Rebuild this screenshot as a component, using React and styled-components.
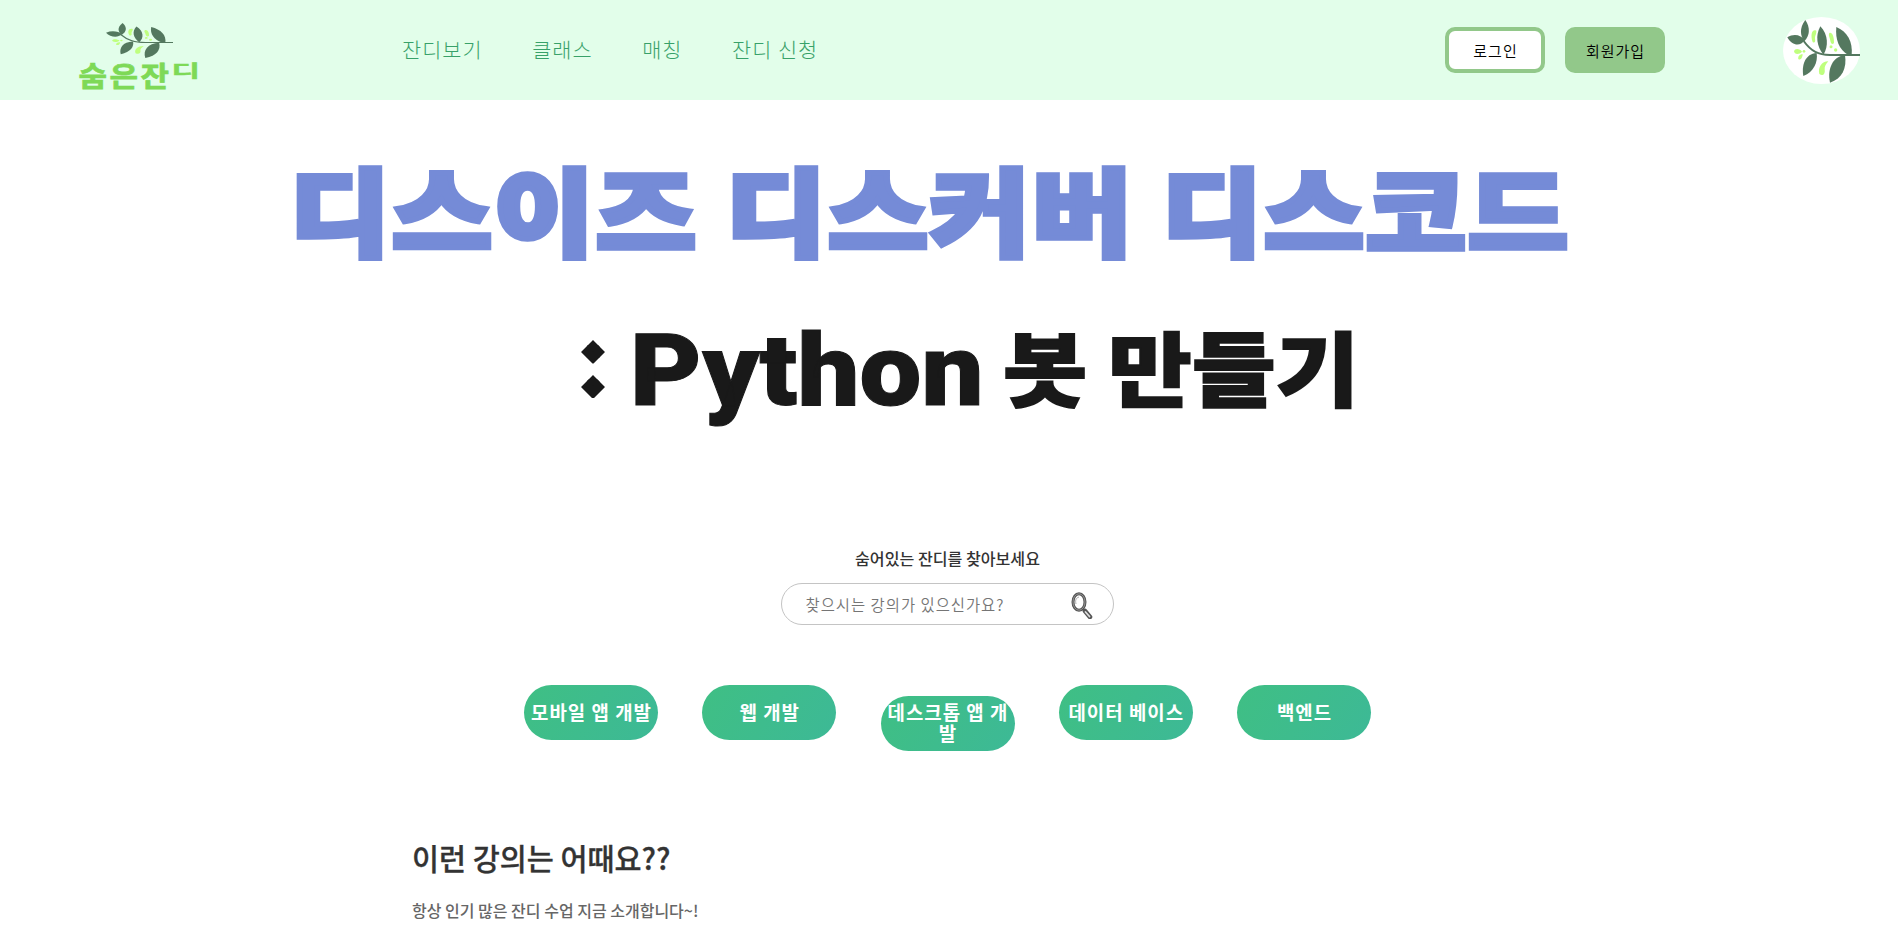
import React from "react";
import styled, { createGlobalStyle } from "styled-components";

const GlobalStyle = createGlobalStyle`
  * { box-sizing: border-box; }
  body {
    margin: 0;
    overflow: hidden;
    background: #fff;
    color: #333;
    font-family: "Noto Sans CJK KR", "Noto Sans", sans-serif;
  }
  h1, h2, p { margin: 0; }
`;

const Page = styled.div`
  width: 100%;
  height: 947px;
  overflow: hidden;
`;

const Header = styled.header`
  display: flex;
  align-items: flex-start;
  height: 100px;
  background: #e2feea;
`;

const Logo = styled.a`
  display: flex;
  flex-direction: column;
  align-items: center;
  width: 120px;
  margin: 23px 0 0 79px;
`;

const LogoText = styled.span`
  display: flex;
  gap: 3px;
  margin-top: 3px;
  height: 30px;
  color: #7ed957;
`;

const LogoGlyph = styled.span`
  display: block;
  width: 28px;
  height: 30px;
  font-size: 31px;
  line-height: 30px;
  font-weight: 700;
  -webkit-text-stroke: 0.8px #7ed957;
  transform-origin: 0 0;
  transform: scaleY(${(p) => p.$squash || 0.93});
`;

const Nav = styled.nav`
  display: flex;
  gap: 49.6px;
  margin: 34px 0 0 203px;
`;

const NavLink = styled.a`
  font-size: 20.8px;
  line-height: 30px;
  letter-spacing: 1px;
  font-weight: 300;
  color: #38a169;
  white-space: nowrap;
`;

const Account = styled.div`
  display: flex;
  gap: 20px;
  margin: 27px 0 0 auto;
`;

const AccountButton = styled.button`
  width: 100px;
  height: 45.5px;
  padding: 2px 0 0 1px;
  border: 4px solid #92c88a;
  border-radius: 10px;
  background: ${(p) => (p.$filled ? "#92c88a" : "#fff")};
  color: #000;
  font-family: inherit;
  font-size: 15px;
  font-weight: 350;
  letter-spacing: 1px;
`;

const Avatar = styled.div`
  width: 77px;
  height: 67px;
  margin: 17px 38px 0 118px;
  border-radius: 50%;
  background: #fff;
`;

const Hero = styled.h1`
  display: flex;
  flex-direction: column;
  height: 440px;
  padding-top: 50px;
  font-weight: 900;
  white-space: nowrap;
`;

const HeroLine = styled.span`
  display: flex;
  height: 165px;
  line-height: 165px;
  padding-left: ${(p) => p.$indent}px;
  color: ${(p) => p.$color};
`;

const HeroWord = styled.span`
  flex: none;
  width: ${(p) => p.$width}px;
  font-family: ${(p) => p.$font || "inherit"};
  font-size: ${(p) => p.$size}px;
  letter-spacing: ${(p) => p.$spacing || 0}px;
  -webkit-text-stroke: ${(p) => p.$stroke}px currentColor;
  transform-origin: 0 50%;
  transform: translateY(${(p) => p.$shift || 0}px) scale(${(p) => p.$sx || 1}, ${(p) => p.$sy || 1});
`;

/* The colon's dots are cut to diamonds. */
const HeroColon = styled(HeroWord)`
  clip-path: polygon(
    15px 62px, 27px 74px, 15px 86px, 15px 97px, 27px 109px,
    15px 121px, 3px 109px, 15px 97px, 15px 86px, 3px 74px
  );
`;

const Search = styled.section`
  display: flex;
  flex-direction: column;
  align-items: center;
  width: 334px;
  margin: 6px auto 0 780px;
`;

const SearchLabel = styled.p`
  padding-left: 1px;
  font-size: 16.1px;
  line-height: 24px;
  font-weight: 500;
`;

const SearchBox = styled.label`
  display: flex;
  align-items: center;
  width: 333px;
  height: 42px;
  margin-top: 13px;
  padding: 0 20px 0 24px;
  border: 1px solid #c4c4c4;
  border-radius: 21px;
`;

const SearchInput = styled.input`
  flex: 1;
  min-width: 0;
  padding: 0;
  border: 0;
  outline: 0;
  background: transparent;
  font-family: inherit;
  font-size: 15.4px;
  font-weight: 350;
  letter-spacing: 1px;
  &::placeholder { color: #757575; opacity: 1; }
`;

const Categories = styled.section`
  display: flex;
  align-items: baseline;
  gap: 44.25px;
  height: 66px;
  margin: 60px 0 0 524px;
`;

const Category = styled.a`
  display: flex;
  align-items: center;
  justify-content: center;
  width: 134px;
  height: 55px;
  padding: 0 0 2px 1px;
  border-radius: 27.5px;
  background: linear-gradient(120deg, #3fbf84, #3db996);
  color: #fff;
  font-size: 18.9px;
  line-height: 21.5px;
  font-weight: 700;
  letter-spacing: 1px;
  text-align: center;
  word-break: break-all;
`;

const Recommend = styled.section`
  margin: 84px 0 0 412px;
`;

const RecommendTitle = styled.h2`
  font-size: 29.4px;
  line-height: 44px;
  font-weight: 500;
  -webkit-text-stroke: 0.3px #333;
`;

const RecommendText = styled.p`
  margin-top: 19px;
  font-size: 16px;
  line-height: 24px;
  font-weight: 500;
  color: #666;
`;

const Branch = ({ width, height, box = "52 45 218 188" }) => (
  <svg width={width} height={height} viewBox={box} preserveAspectRatio="none" aria-hidden="true">
    <path d="M101 108C124 140 145 149 180 150H270" fill="none" stroke="#54785f" strokeWidth="6" />
    <g fill="#54785f">
      <path d="M52 97C72 84 94 90 104 106C90 126 66 122 52 97Z" />
      <path d="M106 45C87 69 91 94 103 109C120 91 121 67 106 45Z" />
      <path d="M151 64C135 93 141 125 160 149C176 126 175 88 151 64Z" />
      <path d="M199 66C195 102 207 135 236 151H245C249 109 231 79 199 66Z" />
      <path d="M140 144C106 146 94 180 100 213C132 200 144 172 140 144Z" />
      <path d="M225 151C188 153 171 193 180 233C217 222 231 188 225 151Z" />
    </g>
    <g fill="#bfff7e">
      <path d="M139 77C127 70 120 88 128 111C134 116 137 109 135 102C134 91 140 88 139 77Z" />
      <path d="M178 84C184 79 193 91 192 114C187 121 182 115 181 107C180 98 174 91 178 84Z" />
      <circle cx="183" cy="125" r="4.5" />
      <circle cx="197" cy="135" r="5" />
      <path d="M72 139C75 128 91 132 96 140C88 149 73 149 72 139Z" />
      <path d="M85 162C83 154 90 147 98 148C98 156 92 168 85 162Z" />
      <circle cx="102" cy="139" r="4" />
      <path d="M175 169C155 169 143 188 148 207C160 216 166 204 164 194C163 184 168 178 175 169Z" />
    </g>
  </svg>
);

const MagnifierIcon = () => (
  <svg width="22" height="29" viewBox="0 -2 22 29" fill="none" aria-hidden="true">
    <ellipse cx="8" cy="10" rx="6" ry="8.2" stroke="#555" strokeWidth="3" />
    <ellipse cx="8" cy="10" rx="6" ry="8.2" stroke="#aaa" strokeWidth="0.7" />
    <path d="M5 12C4 8 5 6 8 5" stroke="#aaa" />
    <path d="M12 17L14 20" stroke="#555" strokeWidth="2" />
    <path d="M14 19L19 25" stroke="#555" strokeWidth="4.6" strokeLinecap="round" />
    <path d="M14.5 20L18.5 24.5" stroke="#ddd" strokeWidth="1.8" strokeLinecap="round" />
  </svg>
);

const navItems = ["잔디보기", "클래스", "매칭", "잔디 신청"];
const categories = ["모바일 앱 개발", "웹 개발", "데스크톱 앱 개발", "데이터 베이스", "백엔드"];

export default function App() {
  return (
    <Page>
      <GlobalStyle />
      <Header>
        <Logo>
          <Branch width={67} height={35} />
          <LogoText>
            <LogoGlyph>숨</LogoGlyph>
            <LogoGlyph>은</LogoGlyph>
            <LogoGlyph>잔</LogoGlyph>
            <LogoGlyph $squash={0.56}>디</LogoGlyph>
          </LogoText>
        </Logo>
        <Nav>
          {navItems.map((item) => (
            <NavLink key={item}>{item}</NavLink>
          ))}
        </Nav>
        <Account>
          <AccountButton>로그인</AccountButton>
          <AccountButton $filled>회원가입</AccountButton>
        </Account>
        <Avatar>
          <Branch width={77} height={67} box="39 36 231 201" />
        </Avatar>
      </Header>

      <Hero>
        <HeroLine $indent={290} $color="#758bd7">
          {["디스이즈", "디스커버", "디스코드"].map((word) => (
            <HeroWord key={word} $width={436} $size={106} $stroke={6} $spacing={2} $sx={1.025} $sy={0.9} $shift={-24}>
              {word}
            </HeroWord>
          ))}
        </HeroLine>
        <HeroLine $indent={578} $color="#191919">
          <HeroColon $width={52} $size={92} $stroke={12} $shift={-37} $font={'"Liberation Sans"'}>:</HeroColon>
          <HeroWord $width={373} $size={101} $stroke={1} $shift={-27} $font="Roboto" $sx={1.09}>Python</HeroWord>
          <HeroWord $width={105} $size={88} $stroke={1.8} $shift={-33} $sx={1.04} $sy={0.92}>봇</HeroWord>
          <HeroWord $width={250} $size={88} $stroke={1.8} $shift={-33} $sx={1.035} $sy={0.92}>만들기</HeroWord>
        </HeroLine>
      </Hero>

      <Search>
        <SearchLabel>숨어있는 잔디를 찾아보세요</SearchLabel>
        <SearchBox>
          <SearchInput placeholder="찾으시는 강의가 있으신가요?" />
          <MagnifierIcon />
        </SearchBox>
      </Search>

      <Categories>
        {categories.map((name) => (
          <Category key={name}>{name}</Category>
        ))}
      </Categories>

      <Recommend>
        <RecommendTitle>이런 강의는 어때요??</RecommendTitle>
        <RecommendText>항상 인기 많은 잔디 수업 지금 소개합니다~!</RecommendText>
      </Recommend>
    </Page>
  );
}
